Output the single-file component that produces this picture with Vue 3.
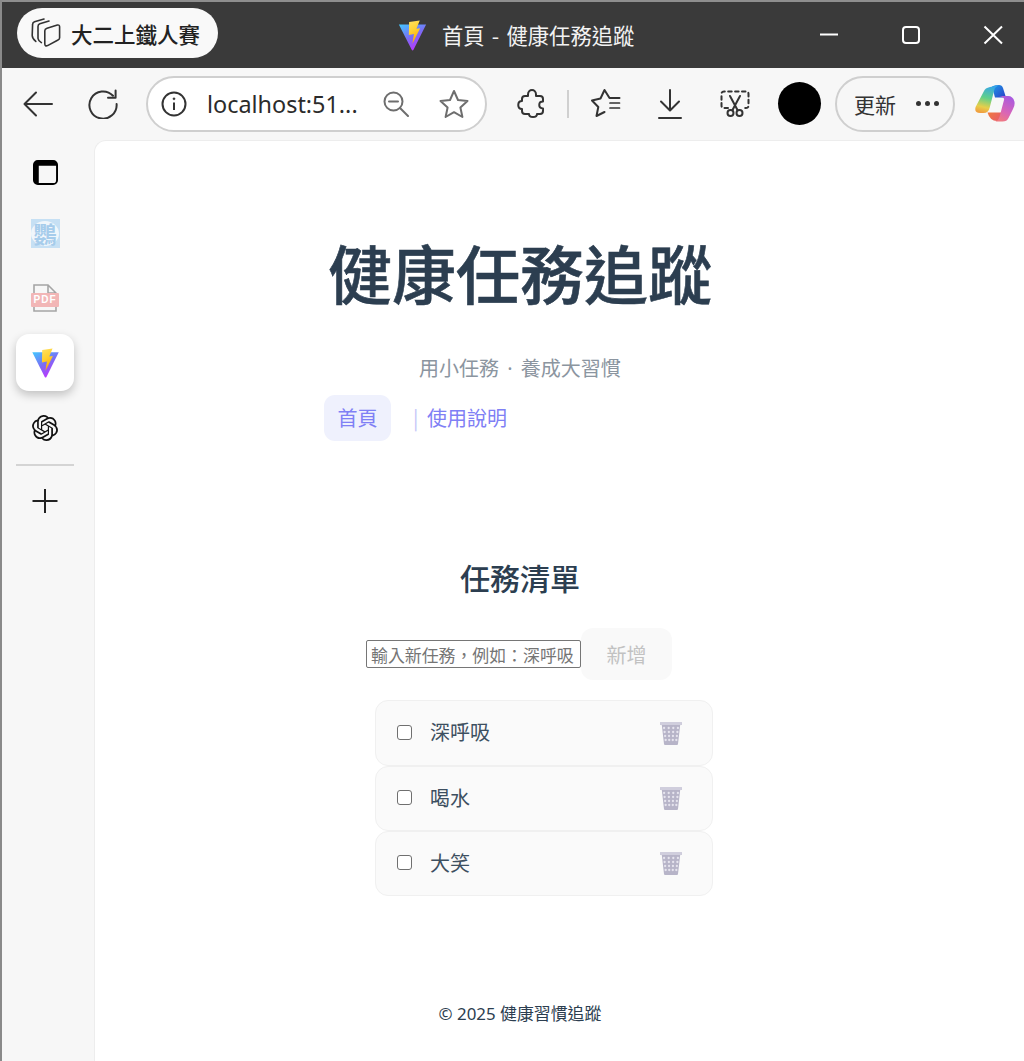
<script setup>
const tasks = ['深呼吸', '喝水', '大笑']
const holes = []
for (let r = 0; r < 4; r++) {
  for (let c = 0; c < 4; c++) {
    const spread = 4.6 - r * 0.35
    holes.push({ x: 12 + (c - 1.5) * spread, y: 7 + r * 4 })
  }
}
</script>

<template>
  <div class="window">
    <header class="titlebar">
      <div class="tab-pill">
        <svg class="tabs-ic" viewBox="0 0 30 30" fill="none" stroke="#333" stroke-width="1.6" stroke-linejoin="round" stroke-linecap="round">
          <path d="M13 1 3.5 3.8Q1.6 4.5 1.6 6.4L1.2 17.5Q1.3 20.5 4.8 23.4" />
          <path d="M18 3 8.8 5.8Q7 6.4 7 8.4L7 20.5Q7.2 22.6 10.4 24.6" />
          <path d="M16 10.2 26.4 7Q28.6 6.6 28.6 8.8V19.8Q28.6 21.4 27 22L16.6 27.6Q14 28.6 13.8 26V12.8Q13.8 10.9 16 10.2Z" />
        </svg>
        <span>大二上鐵人賽</span>
      </div>
      <svg class="vite title-logo" viewBox="0 0 29 32"><use href="#vite-logo" /></svg>
      <span class="win-title">首頁 - 健康任務追蹤</span>
      <div class="win-controls">
        <svg viewBox="0 0 22 22" fill="none" stroke="#fff" stroke-width="2"><path d="M2 10.5H20" /></svg>
        <svg viewBox="0 0 22 22" fill="none" stroke="#fff" stroke-width="2"><rect x="3" y="3" width="16" height="16" rx="3" /></svg>
        <svg viewBox="0 0 22 22" fill="none" stroke="#fff" stroke-width="2"><path d="M2.5 2.5 20 19.5M20 2.5 2.5 19.5" /></svg>
      </div>
    </header>

    <svg class="defs" width="0" height="0" aria-hidden="true">
      <defs>
        <linearGradient id="vg1" x1="0" y1="0" x2="0.6" y2="1"><stop offset="0" stop-color="#41c8ff" /><stop offset="0.55" stop-color="#7b6cf5" /><stop offset="1" stop-color="#bd34fe" /></linearGradient>
        <linearGradient id="vg2" x1="0" y1="0" x2="0.3" y2="1"><stop offset="0" stop-color="#ffe264" /><stop offset="0.5" stop-color="#ffd030" /><stop offset="1" stop-color="#ffa800" /></linearGradient>
        <linearGradient id="cpTop" x1="0" y1="0" x2="1" y2="1"><stop offset="0" stop-color="#1f9ae8" /><stop offset="1" stop-color="#2a3fc8" /></linearGradient>
        <linearGradient id="cpLeft" x1="0.6" y1="0" x2="0.4" y2="1"><stop offset="0" stop-color="#35a5e8" /><stop offset="0.45" stop-color="#5fd08a" /><stop offset="0.8" stop-color="#e8cf4a" /><stop offset="1" stop-color="#f0a040" /></linearGradient>
        <linearGradient id="cpRight" x1="0.7" y1="0" x2="0.3" y2="1"><stop offset="0" stop-color="#a85ae0" /><stop offset="0.6" stop-color="#d865b8" /><stop offset="1" stop-color="#f07a80" /></linearGradient>
        <linearGradient id="cpBot" x1="0" y1="0" x2="1" y2="0.4"><stop offset="0" stop-color="#ef7a3c" /><stop offset="1" stop-color="#e85a68" /></linearGradient>
        <symbol id="vite-logo" viewBox="0 0 29 32">
          <path d="M0.4 4.6 28.6 4.6 15.5 30.8Q14.6 32 13.7 30.8Z" fill="url(#vg1)" />
          <path d="M11 2 22 .5 18.5 9 22.4 8.4 14.4 24.5 16 14.4 10.7 15.4Z" fill="url(#vg2)" />
        </symbol>
      </defs>
    </svg>

    <div class="toolbar">
      <svg class="back" viewBox="0 0 30 26" fill="none" stroke="#333" stroke-width="2" stroke-linecap="round" stroke-linejoin="round"><path d="M1.5 13H29M13 1.5 1.5 13 13 24.5" /></svg>
      <svg class="reload" viewBox="0 0 30 30" fill="none" stroke="#333" stroke-width="2" stroke-linecap="round" stroke-linejoin="round"><path d="M25 6.8A13.6 13.6 0 1 0 28.6 15" /><path d="M27.6 1.5V8.8H20" /></svg>
      <div class="url-pill">
        <svg class="info" viewBox="0 0 26 26" fill="none" stroke="#333" stroke-width="2"><circle cx="13" cy="13" r="11.5" /><path d="M13 11.5V19" /><circle cx="13" cy="7.8" r="1" fill="#333" stroke="#333" stroke-width=".6" /></svg>
        <span class="url">localhost:51...</span>
        <svg class="zoom" viewBox="0 0 26 26" fill="none" stroke="#6e6e6e" stroke-width="2" stroke-linecap="round"><circle cx="10.5" cy="10.5" r="9" /><path d="M6 10.5H15M17 17 25 25" /></svg>
        <svg class="star" viewBox="0 0 30 30" fill="none" stroke="#6e6e6e" stroke-width="2" stroke-linejoin="round"><path d="M15 2 19 11 28.5 12 21.4 18.5 23.4 28 15 23.2 6.6 28 8.6 18.5 1.5 12 11 11Z" /></svg>
      </div>
      <svg class="puzzle" viewBox="0 0 28 30" fill="none" stroke="#333" stroke-width="2" stroke-linejoin="round"><path d="M11 5.5C11 -0.5 19 -0.5 19 5.5V7H23Q26 7 26 10V12.6C21 12.6 21 19.4 26 19.4V22Q26 25 23 25H20C20 29 12 29 12 25H8Q5 25 5 22V20C0 20 0 12 5 12V10Q5 7 8 7H11Z" /></svg>
      <div class="sep"></div>
      <svg class="favs" viewBox="0 0 30 30" fill="none" stroke="#333" stroke-width="2" stroke-linejoin="round" stroke-linecap="round"><path d="M28.5 9H18.5L13.5 1 9.5 9.5 1 11.5 7.3 18 5.5 27 13.5 23" /><path d="M19 14H28.5M19 19H28.5" stroke-width="1.7" /></svg>
      <svg class="dl" viewBox="0 0 24 30" fill="none" stroke="#333" stroke-width="2" stroke-linecap="round" stroke-linejoin="round"><path d="M12 1V21M3 12.5 12 21.5 21 12.5M1 29H23" /></svg>
      <svg class="snip" viewBox="0 0 30 28" fill="none" stroke="#333" stroke-width="2" stroke-linecap="round" stroke-linejoin="round"><path d="M8 18H4Q1.5 18 1.5 15.5V4Q1.5 1.5 4 1.5H26Q28.5 1.5 28.5 4V15.5Q28.5 18 26 18H22" stroke-dasharray="3.5 3.4" /><path d="M10 6 17.5 20M20 6 12.5 20" /><circle cx="10.5" cy="23" r="3" /><circle cx="19.5" cy="23" r="3" /></svg>
      <div class="avatar"></div>
      <div class="update-pill">
        <span>更新</span>
        <span class="dots"><i></i><i></i><i></i></span>
      </div>
      <svg class="copilot" viewBox="0 0 40 37">
        <path d="M17 1.4Q20 0 24 0Q27 0 28 3L31 12.5H20Z" fill="url(#cpTop)" />
        <path d="M9 6Q10 3 15 2L23 .6Q20 2 19 6L14.6 23Q13.5 28 8.5 28H5Q-1 28 .6 22Z" fill="url(#cpLeft)" />
        <path d="M12.5 27.5H26.5L29 36H22Q15 36 12.5 27.5Z" fill="url(#cpBot)" />
        <path d="M24 11H33Q38 11 39.4 16.5Q40.2 20 38 24L33.5 33Q32 36.6 27.5 36.6H20.5Q23.5 35.6 24.5 32L29 15Q29.8 12 24 11Z" fill="url(#cpRight)" />
      </svg>
    </div>

    <div class="body">
      <aside class="sidebar">
        <div class="slot">
          <svg viewBox="0 0 26 26" class="panel-ic"><rect x="1" y="1" width="24" height="24" rx="4" fill="none" stroke="#000" stroke-width="2" /><path d="M1 5Q1 1 5 1H21Q25 1 25 5V6H6V25H5Q1 25 1 21Z" fill="#000" /></svg>
        </div>
        <div class="slot">
          <div class="parrot"><span class="parrot-bubble">鸚</span></div>
        </div>
        <div class="slot">
          <div class="pdf">
            <svg viewBox="0 0 28 28"><path d="M3 11V1H17L25 9V27H3V21M17 1V9H25" fill="none" stroke="#a5a5a5" stroke-width="1.6" /></svg>
            <span class="pdf-band">PDF</span>
          </div>
        </div>
        <div class="slot"><div class="active-tile"><svg class="vite tile-logo" viewBox="0 0 29 32"><use href="#vite-logo" /></svg></div></div>
        <div class="slot">
          <svg viewBox="0 0 24 24" class="gpt"><path fill="#111" d="M22.2819 9.8211a5.9847 5.9847 0 0 0-.5157-4.9108 6.0462 6.0462 0 0 0-6.5098-2.9A6.0651 6.0651 0 0 0 4.9807 4.1818a5.9847 5.9847 0 0 0-3.9977 2.9 6.0462 6.0462 0 0 0 .7427 7.0966 5.98 5.98 0 0 0 .511 4.9107 6.051 6.051 0 0 0 6.5146 2.9001A5.9847 5.9847 0 0 0 13.2599 24a6.0557 6.0557 0 0 0 5.7718-4.2058 5.9894 5.9894 0 0 0 3.9977-2.9001 6.0557 6.0557 0 0 0-.7475-7.0729zm-9.022 12.6081a4.4755 4.4755 0 0 1-2.8764-1.0408l.1419-.0804 4.7783-2.7582a.7948.7948 0 0 0 .3927-.6813v-6.7369l2.02 1.1686a.071.071 0 0 1 .038.052v5.5826a4.504 4.504 0 0 1-4.4945 4.4944zm-9.6607-4.1254a4.4708 4.4708 0 0 1-.5346-3.0137l.142.0852 4.783 2.7582a.7712.7712 0 0 0 .7806 0l5.8428-3.3685v2.3324a.0804.0804 0 0 1-.0332.0615L9.74 19.9502a4.4992 4.4992 0 0 1-6.1408-1.6464zM2.3408 7.8956a4.485 4.485 0 0 1 2.3655-1.9728V11.6a.7664.7664 0 0 0 .3879.6765l5.8144 3.3543-2.0201 1.1685a.0757.0757 0 0 1-.071 0l-4.8303-2.7865A4.504 4.504 0 0 1 2.3408 7.872zm16.5963 3.8558L13.1038 8.364 15.1192 7.2a.0757.0757 0 0 1 .071 0l4.8303 2.7913a4.4944 4.4944 0 0 1-.6765 8.1042v-5.6772a.79.79 0 0 0-.407-.667zm2.0107-3.0231l-.142-.0852-4.7735-2.7818a.7759.7759 0 0 0-.7854 0L9.409 9.2297V6.8974a.0662.0662 0 0 1 .0284-.0615l4.8303-2.7866a4.4992 4.4992 0 0 1 6.6802 4.66zM8.3065 12.863l-2.02-1.1638a.0804.0804 0 0 1-.038-.0567V6.0742a4.4992 4.4992 0 0 1 7.3757-3.4537l-.142.0805L8.704 5.459a.7948.7948 0 0 0-.3927.6813zm1.0976-2.3654l2.602-1.4998 2.6069 1.4998v2.9994l-2.5974 1.4997-2.6067-1.4997Z" /></svg>
        </div>
        <div class="divider"></div>
        <div class="slot">
          <svg viewBox="0 0 26 26" class="ic26" fill="none" stroke="#222" stroke-width="2"><path d="M13 1V25M0.5 13H25.5" /></svg>
        </div>
      </aside>

      <main class="page">
        <div class="container">
          <h1>健康任務追蹤</h1>
          <p class="subtitle">用小任務 · 養成大習慣</p>
          <nav class="nav">
            <a class="nav-link active">首頁</a>
            <span class="bar">|</span>
            <a class="nav-link plain">使用說明</a>
          </nav>
          <h2>任務清單</h2>
          <div class="add-row">
            <input class="task-input" placeholder="輸入新任務，例如：深呼吸" />
            <button class="add-btn">新增</button>
          </div>
          <ul class="list">
            <li v-for="t in tasks" :key="t" class="item">
              <input type="checkbox" class="check" />
              <span class="task">{{ t }}</span>
              <svg class="trash" viewBox="0 0 24 24">
                <path d="M1.5 1H22.5L23 4H21.2L19 23Q18.9 24 18 24H6Q5.1 24 5 23L2.8 4H1Z" fill="#b7b4c8" />
                <path d="M1.5 1H22.5L23 4H1Z" fill="#d0cedd" />
                <circle v-for="(h, i) in holes" :key="i" :cx="h.x" :cy="h.y" r="1.15" fill="#e6e4ee" />
              </svg>
            </li>
          </ul>
          <footer class="foot">© 2025 健康習慣追蹤</footer>
        </div>
      </main>
    </div>
  </div>
</template>

<style>
html, body { margin: 0; background: #f7f7f7; overflow: hidden; }
</style>

<style scoped>
.window {
  width: 1024px;
  height: 1061px;
  box-sizing: border-box;
  border-left: 2px solid #8a8a8a;
  display: flex;
  flex-direction: column;
  overflow: hidden;
  font-family: "Noto Sans", "Noto Sans CJK TC", sans-serif;
  background: #f7f7f7;
}
.defs { position: absolute; }
.titlebar {
  height: 66px;
  flex: none;
  background: #3a3a3a;
  border-top: 2px solid #8e8e8e;
  display: flex;
  align-items: center;
}
.tab-pill {
  margin: 0 0 4px 15px;
  width: 201px;
  height: 50px;
  border-radius: 25px;
  background: #f9f9f9;
  display: flex;
  align-items: center;
  box-sizing: border-box;
  padding-left: 14px;
  gap: 10px;
  font: 500 21.5px "Noto Sans CJK TC", sans-serif;
  color: #222;
}
.ic26 { width: 26px; height: 26px; flex: none; }
.panel-ic { width: 25px; height: 25px; flex: none; }
.tabs-ic { width: 30px; height: 30px; flex: none; }
.title-logo { width: 29px; height: 31px; margin-left: 180px; }
.win-title {
  margin: 0 0 2px 15px;
  color: #f2f2f2;
  font: 400 21.3px "Noto Sans CJK TC", sans-serif;
  word-spacing: 2.5px;
}
.win-controls {
  margin-left: auto;
  margin-right: 20px;
  display: flex;
  gap: 60px;
}
.win-controls svg { width: 22px; height: 22px; }

.toolbar {
  height: 71px;
  padding-bottom: 1px;
  flex: none;
  display: flex;
  align-items: center;
  background: #f7f7f7;
}
.toolbar svg { flex: none; }
.back { width: 30px; height: 26px; margin-left: 21px; }
.reload { width: 30px; height: 30px; margin-left: 35px; }
.url-pill {
  margin-left: 28px;
  width: 341px;
  height: 56px;
  box-sizing: border-box;
  border: 2px solid #cfcfcf;
  border-radius: 28px;
  background: #fff;
  display: flex;
  align-items: center;
}
.info { width: 26px; height: 26px; margin-left: 13px; }
.url { margin-left: 20px; font-size: 23.4px; color: #2b2b2b; white-space: nowrap; width: 164px; }
.zoom { width: 26px; height: 26px; margin-left: 12px; }
.star { width: 30px; height: 30px; margin-left: 30px; }
.puzzle { width: 28px; height: 30px; margin-left: 30px; }
.sep { width: 2px; height: 28px; background: #d0d0d0; margin-left: 22px; }
.favs { width: 30px; height: 30px; margin-left: 22px; }
.dl { width: 24px; height: 30px; margin-left: 37px; }
.snip { width: 30px; height: 28px; margin-left: 38px; }
.avatar { width: 43px; height: 43px; border-radius: 50%; background: #000; margin-left: 28px; flex: none; }
.update-pill {
  margin-left: 14px;
  width: 120px;
  height: 56px;
  box-sizing: border-box;
  border: 2px solid #cfcfcf;
  border-radius: 28px;
  display: flex;
  align-items: center;
  padding-left: 17px;
  font: 400 21px "Noto Sans CJK TC", sans-serif;
  color: #333;
  flex: none;
}
.dots { display: flex; gap: 4px; margin-left: 20px; }
.dots i { width: 5px; height: 5px; border-radius: 50%; background: #333; display: block; }
.copilot { width: 40px; height: 37px; margin-left: 20px; }

.body { flex: 1; display: flex; min-height: 0; }
.sidebar {
  width: 92px;
  flex: none;
  display: grid;
  grid-template-rows: 64px 58px 72px 57px 73px 2px 70px;
  align-content: start;
  background: #f7f7f7;
}
.slot { display: flex; align-items: center; justify-content: center; margin-right: 6px; }
.divider { width: 58px; height: 2px; background: #d4d4d4; margin-left: 14px; }
.parrot {
  width: 29px;
  height: 29px;
  background: #c6e0f4;
  display: flex;
  align-items: center;
  justify-content: center;
}
.parrot-bubble {
  width: 28px;
  height: 25px;
  border-radius: 50%;
  background: #f0f6fb;
  color: #a6cceb;
  font: 700 23px/25px "Noto Sans CJK TC", sans-serif;
  text-align: center;
}
.pdf { position: relative; width: 28px; height: 28px; }
.pdf svg { width: 28px; height: 28px; display: block; }
.pdf-band {
  position: absolute;
  left: 0;
  top: 9px;
  width: 28px;
  height: 14px;
  background: #f2b6b6;
  color: #fff;
  font: 700 10px/14px "Liberation Sans", sans-serif;
  letter-spacing: 1px;
  text-align: center;
  border-radius: 1px;
}
.active-tile {
  width: 58px;
  height: 57px;
  background: #fff;
  border-radius: 13px;
  box-shadow: 0 4px 10px rgba(0, 0, 0, .22);
  display: flex;
  align-items: center;
  justify-content: center;
}
.tile-logo { width: 29px; height: 30px; }
.gpt { width: 26px; height: 26px; }

.page {
  flex: 1;
  background: #fff;
  border-top-left-radius: 12px;
  border-left: 1px solid #ededed;
  border-top: 1px solid #ededed;
  min-width: 0;
}
.container {
  width: 392px;
  margin-left: 229px;
  padding-top: 90px;
  color: #2c3e50;
}
h1 {
  margin: 0;
  font: 500 64px/80px "Noto Sans CJK TC", sans-serif;
  -webkit-text-stroke: .6px #2c3e50;
  text-align: center;
  white-space: nowrap;
}
.subtitle {
  margin: 43px 0 0;
  font: 400 20px/30px "Noto Sans", "Noto Sans CJK TC", sans-serif;
  text-align: center;
  color: #8b95a0;
  word-spacing: 3px;
}
.nav {
  margin-top: 11px;
  height: 46px;
  display: flex;
  align-items: center;
  font: 400 20px/30px "Noto Sans CJK TC", sans-serif;
  color: #7f80f5;
}
.nav-link.active {
  background: #eff1fd;
  border-radius: 11px;
  width: 67px;
  height: 46px;
  display: flex;
  align-items: center;
  justify-content: center;
}
.bar { margin-left: 22px; color: #c3c6f8; width: 14px; }
h2 {
  margin: 114px 0 0;
  font: 500 30px/44px "Noto Sans CJK TC", sans-serif;
  text-align: center;
}
.add-row {
  margin-top: 29px;
  padding-right: 2px;
  display: flex;
  justify-content: center;
  align-items: center;
}
.task-input {
  width: 215px;
  height: 28px;
  box-sizing: border-box;
  border: 1px solid #767676;
  border-radius: 2px;
  padding: 0 4px;
  background: #fff;
  font: 400 16.9px "Noto Sans CJK TC", sans-serif;
}
.task-input::placeholder { color: #757575; opacity: 1; }
.add-btn {
  width: 91px;
  height: 52px;
  border: none;
  border-radius: 12px;
  background: #f9f9f9;
  color: #c2c2c2;
  font: 400 20px "Noto Sans CJK TC", sans-serif;
  padding: 0;
}
.list { list-style: none; margin: 20px 0 0 51px; padding: 0; width: 338px; }
.item {
  height: 65px;
  box-sizing: border-box;
  border: 1px solid #f0f0f0;
  border-radius: 13px;
  background: #fafafa;
  display: flex;
  align-items: center;
  padding-left: 21px;
  font: 400 20px "Noto Sans CJK TC", sans-serif;
}
.item:first-child { height: 66px; }
.check {
  appearance: none;
  box-sizing: border-box;
  width: 15px;
  height: 15px;
  margin: 0 0 2px;
  border: 1.5px solid #6f6f6f;
  border-radius: 3px;
  background: #fff;
}
.task { margin-left: 18px; padding-bottom: 3px; color: #3d4f60; }
.trash { width: 24px; height: 24px; margin: 0 29px 1px auto; }
.foot {
  margin-top: 106px;
  font: 400 16.9px/24px "Noto Sans", "Noto Sans CJK TC", sans-serif;
  text-align: center;
}
</style>
